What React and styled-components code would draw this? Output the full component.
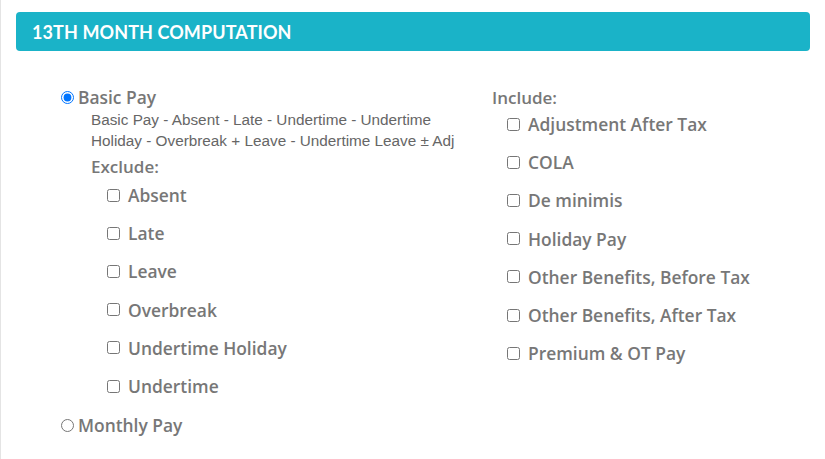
import React from "react";
import styled, { createGlobalStyle } from "styled-components";

const Global = createGlobalStyle`
  html, body { margin: 0; padding: 0; background: #fff; }
  body { font-family: "Open Sans", "Noto Sans", sans-serif; }
`;

const Page = styled.div`
  box-sizing: border-box;
  min-height: 459px;
  border-left: 1px solid #e4e4e4;
  padding: 12px 15px 0 15px;
`;

const Header = styled.div`
  height: 39px;
  background: #1ab3c8;
  border-radius: 4px;
  display: flex;
  align-items: center;
  padding-left: 16px;
  color: #fff;
  font-family: "Lato", sans-serif;
  font-weight: 700;
  font-size: 18px;
  letter-spacing: 0.1px;
  text-transform: uppercase;
`;

const Columns = styled.div`
  display: grid;
  grid-template-columns: 431px 1fr;
  padding-left: 45px;
  margin-top: 34px;
`;

const Column = styled.div`
  display: flex;
  flex-direction: column;
  margin-top: ${(p) => p.$offset || 0}px;
`;

const Row = styled.label`
  display: flex;
  align-items: center;
  height: ${(p) => p.$h}px;
  padding-left: ${(p) => p.$indent || 0}px;
  color: #777;
  font-size: 17.4px;
  font-weight: 600;
`;

const Radio = styled.input.attrs({ type: "radio" })`
  width: 13px;
  height: 13px;
  margin: 0 4px 0 0;
`;

const Check = styled.input.attrs({ type: "checkbox" })`
  width: 13px;
  height: 13px;
  margin: 0 8px 0 0;
`;

const Formula = styled.div`
  padding-left: 30px;
  margin-bottom: 6px;
  font-family: "Liberation Sans", Arial, sans-serif;
  font-size: 15.3px;
  line-height: 21px;
  color: #666;
  white-space: nowrap;
`;

const Heading = styled.div`
  display: flex;
  align-items: center;
  height: ${(p) => p.$h}px;
  padding-left: ${(p) => p.$indent || 0}px;
  color: #777;
  font-size: 17px;
  font-weight: 600;
`;

const exclude = ["Absent", "Late", "Leave", "Overbreak", "Undertime Holiday", "Undertime"];
const include = [
  "Adjustment After Tax",
  "COLA",
  "De minimis",
  "Holiday Pay",
  "Other Benefits, Before Tax",
  "Other Benefits, After Tax",
  "Premium & OT Pay",
];

export default function App() {
  return (
    <>
      <Global />
      <Page>
        <Header>13th Month Computation</Header>
        <Columns>
          <Column>
            <Row $h={24}>
              <Radio name="basis" defaultChecked />
              Basic Pay
            </Row>
            <Formula>
              Basic Pay - Absent - Late - Undertime - Undertime
              <br />
              Holiday - Overbreak + Leave - Undertime Leave ± Adj
            </Formula>
            <Heading $h={19} $indent={30}>Exclude:</Heading>
            {exclude.map((x) => (
              <Row key={x} $h={38.2} $indent={46}>
                <Check />
                {x}
              </Row>
            ))}
            <Row $h={40}>
              <Radio name="basis" />
              Monthly Pay
            </Row>
          </Column>
          <Column $offset={4}>
            <Heading $h={16}>Include:</Heading>
            {include.map((x) => (
              <Row key={x} $h={38.2} $indent={15}>
                <Check />
                {x}
              </Row>
            ))}
          </Column>
        </Columns>
      </Page>
    </>
  );
}
